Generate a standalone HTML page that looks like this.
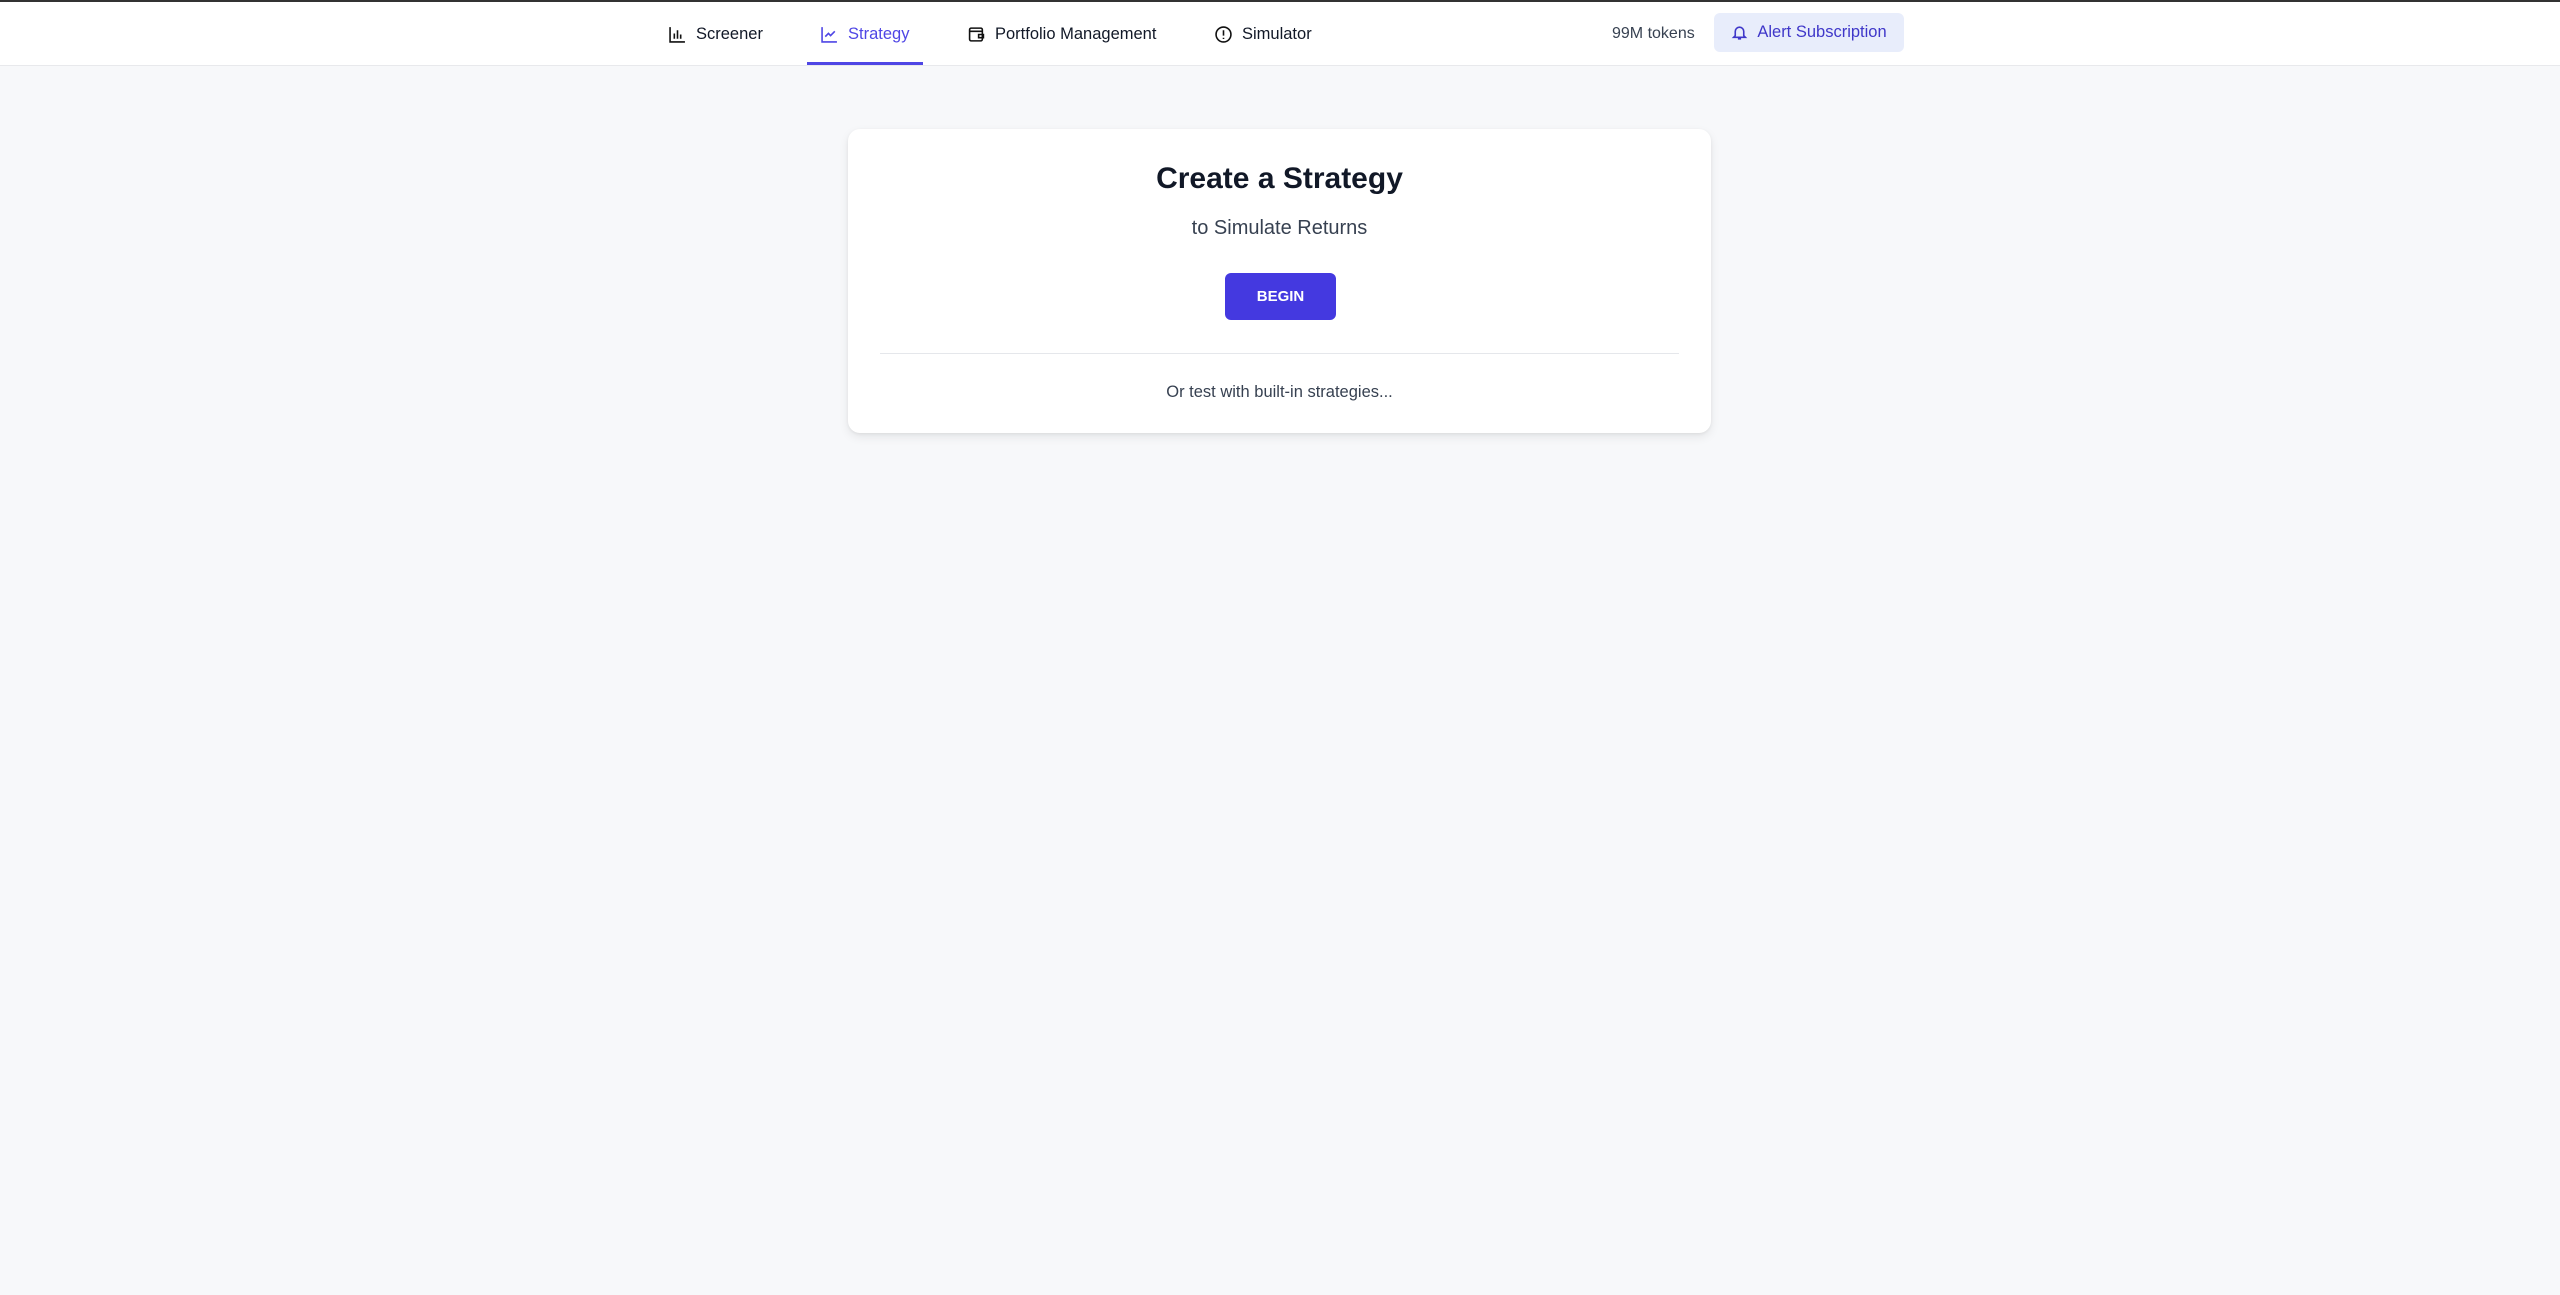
<!DOCTYPE html>
<html><head><meta charset="utf-8"><style>
*{box-sizing:border-box;margin:0;padding:0}
body{width:2560px;height:1295px;background:#f7f8fa;font-family:"Liberation Sans",sans-serif;position:relative;overflow:hidden}
.top{position:absolute;left:0;top:0;width:2560px;height:2px;background:#333}
.nav{position:absolute;left:0;top:2px;width:2560px;height:64px;background:#fff;border-bottom:1px solid #e8e9ec}
.item{position:absolute;top:0;height:64px;display:flex;align-items:center;font-size:16.5px;color:#111827}
.item svg{width:17px;height:17px;margin-right:10px}
.item.active{color:#4f46e5}
.ul{position:absolute;left:807px;top:60px;width:116px;height:3px;background:#4f46e5}
.tokens{position:absolute;left:1612px;top:0;height:64px;display:flex;align-items:center;font-size:16px;color:#374151}
.alert{position:absolute;left:1714px;top:11px;width:190px;height:39px;background:#e8edfb;border-radius:6px;display:flex;align-items:center;justify-content:center;color:#3f37c9;font-size:16.5px}
.alert svg{width:17px;height:17px;margin-right:9px}
.card{position:absolute;left:848px;top:129px;width:863px;height:304px;background:#fff;border-radius:12px;box-shadow:0 4px 10px rgba(0,0,0,.08),0 1px 3px rgba(0,0,0,.06);text-align:center}
h1{position:absolute;top:33px;width:100%;font-size:30px;font-weight:bold;color:#111827}
.sub{position:absolute;top:88px;width:100%;font-size:20px;color:#374151}
.btn{position:absolute;left:377px;top:144px;width:111px;height:47px;background:#4439e0;border-radius:6px;color:#fff;font-weight:bold;font-size:15px;display:flex;align-items:center;justify-content:center}
.hr{position:absolute;left:32px;right:32px;top:224px;height:1px;background:#e5e7eb}
.or{position:absolute;top:254px;width:100%;font-size:16.5px;color:#374151}
</style></head><body>
<div class="top"></div>
<div class="nav">
<div class="item" style="left:669px"><svg viewBox="0 0 16 16" fill="none" stroke="#111" stroke-width="1.5"><path d="M1 1v14h14M5 12V7M8 12V4M11 12V8"/></svg>Screener</div>
<div class="item active" style="left:821px"><svg viewBox="0 0 16 16" fill="none" stroke="#4f46e5" stroke-width="1.5"><path d="M1 1v14h14M4 10l3-3 2 2 4-4"/></svg>Strategy</div>
<div class="ul"></div>
<div class="item" style="left:968px"><svg viewBox="0 0 16 16" fill="none" stroke="#111" stroke-width="1.5"><rect x="1.5" y="2" width="12" height="12" rx="1.5"/><path d="M1.5 5h12M10 8h4.5v3H10z"/></svg>Portfolio Management</div>
<div class="item" style="left:1215px"><svg viewBox="0 0 16 16" fill="none" stroke="#111" stroke-width="1.5"><circle cx="8" cy="8" r="7"/><path d="M8 4v5M8 11v1.2"/></svg>Simulator</div>
<div class="tokens">99M tokens</div>
<div class="alert"><svg viewBox="0 0 16 16" fill="none" stroke="#3f37c9" stroke-width="1.5"><path d="M4 11V7a4 4 0 018 0v4l1.5 1.5h-11zM6.5 14h3"/></svg>Alert Subscription</div>
</div>
<div class="card">
<h1>Create a Strategy</h1>
<div class="sub">to Simulate Returns</div>
<div class="btn">BEGIN</div>
<div class="hr"></div>
<div class="or">Or test with built-in strategies...</div>
</div>
</body></html>
